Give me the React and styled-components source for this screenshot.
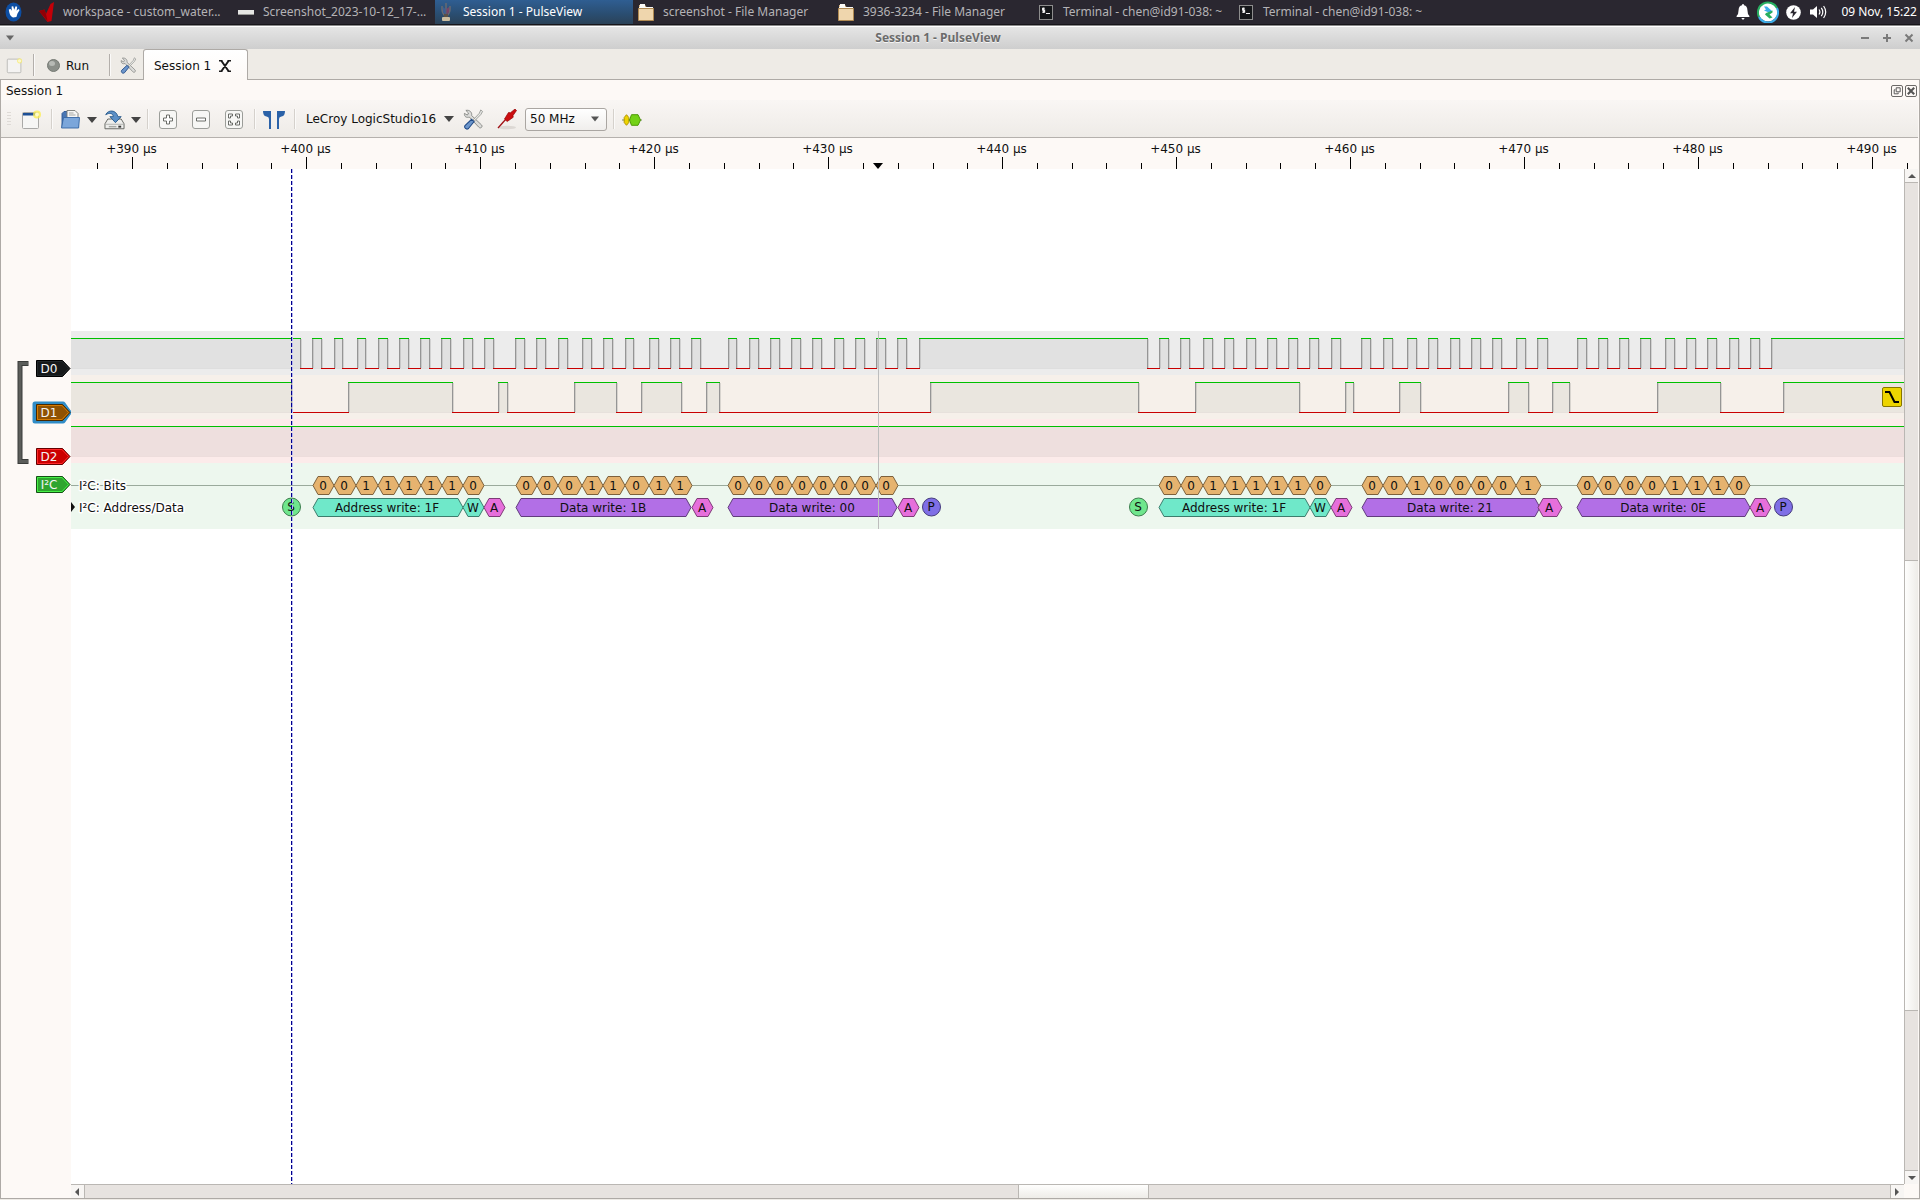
import React from "react";
import styled, { createGlobalStyle, css } from "styled-components";

const GlobalStyle = createGlobalStyle`
  * { box-sizing: border-box; }
  body { margin: 0; background: #eeebe6; }
  button, select { font: inherit; color: inherit; margin: 0; padding: 0; border: 0; background: none; }
  svg { display: block; flex: none; }
`;

const EDGE = "#aeaaa6";

const Screen = styled.div`
  display: flex;
  flex-direction: column;
  height: 100vh;
  overflow: hidden;
  font: 12px/16px "DejaVu Sans", sans-serif;
  color: #101010;
`;

/* ---------- desktop panel ---------- */
const Panel = styled.header`
  display: flex;
  align-items: center;
  height: 25px;
  background: #2a2730;
  border-bottom: 1px solid #17151a;
  font: 12px/16px "Noto Sans", sans-serif;
  color: #b4b3b6;
`;
const MenuButton = styled.button`
  width: 35px;
  padding-left: 5px;
`;
const Tasks = styled.nav`
  display: flex;
  flex: 1;
  height: 100%;
`;
const Task = styled.button`
  display: flex;
  align-items: center;
  gap: 8px;
  width: 200px;
  height: 100%;
  padding-left: 2px;
  white-space: nowrap;
  ${(p) => p.$active && css`
    color: #fff;
    background: linear-gradient(#2f5e92, #2a4d70 60%, #2b4257);
    width: 198px;
    margin-right: 2px;
  `}
`;
const Tray = styled.div`
  display: flex;
  align-items: center;
  gap: 3px;
  padding-right: 3px;
  color: #fff;
`;
const TrayButton = styled.button`
  display: grid;
  place-items: center;
  width: 22px;
  height: 24px;
`;
const Clock = styled.time`
  padding-left: 9px;
  white-space: nowrap;
`;

/* ---------- window frame ---------- */
const TitleBar = styled.div`
  display: grid;
  grid-template-columns: 80px 1fr 124px;
  align-items: center;
  height: 24px;
  padding-top: 1px;
  border-top: 1px solid #8a8a8a;
  box-shadow: inset 0 1px 0 #fff;
  background: linear-gradient(#e6e6e6, #cecece);
  color: #6b6b6b;
`;
const WindowTitle = styled.h1`
  margin: 0;
  text-align: center;
  font: bold 12px/16px "Noto Sans", sans-serif;
  text-shadow: 0 1px 0 #f4f4f4;
`;
const WindowButtons = styled.div`
  display: flex;
  justify-content: flex-end;
`;
const WindowButton = styled.button`
  display: grid;
  place-items: center;
  width: 22px;
  height: 20px;
`;
const MenuCaret = styled(WindowButton)`
  width: 20px;
`;

/* ---------- session tabs ---------- */
const TabRow = styled.div`
  display: flex;
  align-items: center;
  height: 31px;
  background: #eeebe6;
  box-shadow: inset 0 -1px 0 ${EDGE};
`;
const ToolButton = styled.button`
  display: grid;
  place-items: center;
  width: ${(p) => p.$w || 32}px;
  height: 28px;
  padding-top: 1px;
`;
const Separator = styled.span`
  width: 8px;
  height: ${(p) => p.$h || 20}px;
  background: linear-gradient(90deg, transparent 4px, ${(p) => p.$c || "#d5d1cc"} 4px, ${(p) => p.$c || "#d5d1cc"} 5px, #fbfaf9 5px, #fbfaf9 6px, transparent 6px);
`;
const RunButton = styled.button`
  display: flex;
  align-items: center;
  gap: 6px;
  width: 68px;
  height: 28px;
  padding: 2px 0 0 10px;
`;
const Tab = styled.div`
  display: flex;
  align-items: center;
  gap: 8px;
  height: 31px;
  padding: 1px 16px 0 10px;
  border: 1px solid ${EDGE};
  border-bottom: 0;
  border-radius: 3px 3px 0 0;
  background: linear-gradient(#fff, #fdf9f6);
`;

/* ---------- session dock ---------- */
const Dock = styled.main`
  display: flex;
  flex-direction: column;
  flex: 1;
  min-height: 0;
  margin-bottom: 1px;
  border: 1px solid ${EDGE};
  border-top: 0;
  background: #fdf9f6;
`;
const DockTitle = styled.div`
  display: flex;
  align-items: center;
  gap: 2px;
  height: 20px;
  padding: 2px 2px 0 5px;
`;
const DockName = styled.span`
  flex: 1;
`;
const DockButton = styled.button`
  display: grid;
  place-items: center;
  width: 12px;
  height: 12px;
  border: 1px solid #6c6a68;
  border-radius: 2px;
`;
const Toolbar = styled.div`
  display: flex;
  align-items: center;
  height: 38px;
  margin-right: 1px;
  padding-top: 1px;
  border-bottom: 1px solid #b5b1ad;
  background: linear-gradient(#f9f6f4, #eeebe7);
`;
const Grip = styled.span`
  width: 4px;
  height: 16px;
  margin: 0 4px 0 6px;
  background: radial-gradient(circle, #dedad6 1px, transparent 1px) 0 0 / 2px 3px;
`;
const SplitButton = styled.button`
  display: flex;
  align-items: center;
  gap: 6px;
  width: 44px;
  height: 28px;
  padding: 1px 0 0 5px;
`;
const DeviceButton = styled.button`
  display: flex;
  align-items: center;
  justify-content: space-between;
  width: 158px;
  height: 28px;
  padding: 0 2px 0 8px;
  white-space: nowrap;
`;
const RateField = styled.label`
  display: grid;
  grid-template-columns: 1fr 15px;
  align-items: center;
  width: 82px;
  height: 23px;
  margin: 0 2px;
  border: 1px solid #aaa6a2;
  border-radius: 3px;
  background: linear-gradient(#fff, #f0eeec);
`;
const RateSelect = styled.select`
  grid-area: 1 / 1 / 2 / 3;
  height: 21px;
  padding-left: 4px;
  appearance: none;
  outline: 0;
`;
const RateCaret = styled.span`
  grid-area: 1 / 2;
  pointer-events: none;
`;

/* ---------- trace view ---------- */
const RulerRow = styled.div`
  height: 31px;
  padding-left: 70px;
`;
const ViewGrid = styled.div`
  display: grid;
  grid-template-columns: 70px minmax(0, 1fr) 14px;
  grid-template-rows: minmax(0, 1fr) 14px;
  flex: 1;
  min-height: 0;
  padding-right: 1px;
`;
const Labels = styled.div`
  grid-row: 1 / 3;
  padding: 191px 0 0 15px;
`;
const Group = styled.div`
  display: flex;
  gap: 7px;
`;
const TagColumn = styled.div`
  display: flex;
  flex-direction: column;
  gap: 26px;
`;
const DecoderTag = styled.div`
  padding: 10px 0 0 20px;
`;
const TagButton = styled.button`
  display: block;
  height: 18px;
`;
const Traces = styled.div`
  position: relative;
  overflow: hidden;
  padding-top: 162px;
  background: #fff;
`;
const Lane = styled.div`
  position: relative;
  height: ${(p) => p.$h || 44}px;
  background: ${(p) => p.$bg};
`;
const Overlay = styled.svg`
  position: absolute;
  inset: 0;
  pointer-events: none;
`;
const Trigger = styled.button`
  position: absolute;
  top: 12px;
  right: 2px;
  display: grid;
  place-items: center;
  width: 20px;
  height: 20px;
  border: 1px solid #877600;
  border-radius: 2px;
  background: #edd400;
`;
const ScrollBar = styled.div`
  display: flex;
  flex-direction: ${(p) => (p.$vertical ? "column" : "row")};
  background: #e7e3e0;
  ${(p) => (p.$vertical ? `border-left: 1px solid #bab7b3;` : `border-top: 1px solid #bab7b3;`)}
`;
const ScrollButton = styled.button`
  display: grid;
  place-items: center;
  flex: none;
  width: 13px;
  height: 13px;
  background: #f7f5f3;
`;
const Track = styled.div`
  display: flex;
  flex: 1;
  flex-direction: inherit;
  ${(p) => (p.$vertical
    ? `border-top: 1px solid #bab7b3; border-bottom: 1px solid #bab7b3;`
    : `border-left: 1px solid #bab7b3; border-right: 1px solid #bab7b3;`)}
`;
const Space = styled.span`
  flex: ${(p) => p.$n} 0 0;
`;
const Thumb = styled.div`
  flex: ${(p) => p.$n} 0 0;
  ${(p) => (p.$vertical
    ? `border-top: 1px solid #bab7b3; border-bottom: 1px solid #bab7b3; background: linear-gradient(90deg, #fefefd, #eeece8);`
    : `border-left: 1px solid #bab7b3; border-right: 1px solid #bab7b3; background: linear-gradient(#fefefd, #eeece8);`)}
`;

/* ---------- icons ---------- */
const Caret = ({ w = 10, c = "#444" }) => (
  <svg width={w} height="6" viewBox="0 0 10 6"><path d="M0 0H10L5 6Z" fill={c} /></svg>
);
const MouseIcon = () => (
  <svg width="18" height="20" viewBox="0 0 18 20">
    <ellipse cx="8.500" cy="10" rx="8" ry="9.500" fill="#0d4ea3" />
    <path d="M3.800 7.500l1.800-.5 1.200 1.800L6.600 4.500l1.600-.2 1 3.500 1.400-3.500 1.600.4-.6 4 1.800-1.600 1.200.9-2.200 3.700-1 3.300-3.300.4C5.200 14.500 4.200 11 3.800 7.500Z" fill="#fff" />
  </svg>
);
const CheckMarkIcon = () => (
  <svg width="18" height="20" viewBox="0 0 18 20">
    <path d="M2 9l5.500-1.500L9 12 13.500 2 17 0 14.500 19 10.500 20Z" fill="#c40008" />
    <path d="M2 9l5.500-1.500L9 12l1.500 7Z" fill="#8f0006" />
  </svg>
);
const ShotIcon = () => (
  <svg width="18" height="20"><rect x="1" y="8" width="16" height="5" fill="#e6e6e4" /><rect x="1" y="12" width="16" height="1" fill="#9a9a98" /></svg>
);
const ProbeAppIcon = () => (
  <svg width="18" height="20" viewBox="0 0 18 20">
    <path d="M5 4v3q0 4 3 7M13 4v3q0 4-3 7M9 1v12" stroke="#676a72" strokeWidth="1.500" fill="none" />
    <path d="M6 5l2.500 2v6L6 10Z" fill="#3c5f94" /><path d="M12 5L9.500 7v6l2.500-3Z" fill="#7a4468" />
    <rect x="7" y="12" width="4" height="4" fill="#5b5147" /><rect x="5" y="15" width="8" height="4" rx="1" fill="#cbbd9f" />
  </svg>
);
const FolderIcon = () => (
  <svg width="18" height="20" viewBox="0 0 18 20">
    <path d="M2 3h6l1.500 2H16v5H2Z" fill="#d9b98a" />
    <path d="M3 2h5v3h8v2H2V5h1Z" fill="#fbfaf6" />
    <path d="M1.500 6.500h15v12h-15Z" fill="#efd6ad" stroke="#b08a52" />
  </svg>
);
const TerminalIcon = () => (
  <svg width="18" height="20" viewBox="0 0 18 20">
    <rect x="2.500" y="3.500" width="13" height="14" fill="#15171a" stroke="#8d8d8d" />
    <path d="M7.800 6.300H5.600v1.800h2v2H5.200M6.600 5.500v5.500M9 11.500h4" stroke="#f0f0f0" strokeWidth="1.100" fill="none" />
  </svg>
);
const NewIcon = ({ s = 20, faded }) => (
  <svg width={s} height={s} viewBox="0 0 20 20" opacity={faded ? 0.8 : 1}>
    <rect x="1.500" y="2.500" width="16" height="16" rx="1" fill="#f6f6f5" stroke="#a9a9a7" />
    {!faded && <rect x="2" y="3" width="15" height="2.500" fill="#1d4f96" />}
    <circle cx="16" cy="4.500" r={faded ? 3 : 4} fill="#fcee4b" opacity=".75" />
    <circle cx="16" cy="4.500" r="2" fill="#fffbc9" />
  </svg>
);
const ToolsIcon = ({ s = 21 }) => (
  <svg width={s} height={s} viewBox="0 0 22 22">
    <path d="M3 1.500l2.800 2.700L4.600 6.400 1.500 4.600C1 8 3.800 9.500 6.600 8.400L16.500 19c1.800 2 4.500-.2 3-2.200L9 6.800C9.800 3.800 7 .5 3 1.500Z" fill="#dcdcda" stroke="#7d7f7c" strokeWidth=".9" />
    <path d="M18.600 1l1.900 1.600-1.900 3.300-6.600 6.600-1.300-1.200 6.400-6.800Z" fill="#e9e9e7" stroke="#888a85" strokeWidth=".8" />
    <path d="M9 10.800l2.600 2.400-5.800 7.200c-2.400 1.800-5-.8-3.700-3.100Z" fill="#6d96cb" stroke="#204a87" strokeWidth="1.100" />
  </svg>
);
const OpenIcon = () => (
  <svg width="21" height="21" viewBox="0 0 21 21">
    <path d="M2 4.500l2-2h4V9h10v9H2Z" fill="#4a77b4" stroke="#2c5894" strokeWidth=".9" />
    <path d="M7 9V1.500h8l3 3V10" fill="#f5f5f4" stroke="#777975" strokeWidth=".9" />
    <path d="M9 4h4.500M9 6h6.500" stroke="#9d9f9b" strokeWidth=".9" />
    <path d="M3.500 8.500h16L18.600 19H1.500Z" fill="#7ba6da" stroke="#3465a4" strokeWidth=".9" />
  </svg>
);
const SaveIcon = () => (
  <svg width="21" height="21" viewBox="0 0 22 21">
    <path d="M4 10h14l3 5v5.200H1V15Z" fill="#eeeeec" stroke="#646662" strokeWidth="1" />
    <path d="M1.500 15.500h19" stroke="#a0a29e" strokeWidth=".8" />
    <path d="M5 18h8" stroke="#a6a8a4" strokeWidth="1.500" /><path d="M15 17h3v2h-3Z" fill="#333" />
    <path d="M1.800 5.500C4 0 13 0 14.500 7.500h3.500l-6 6.300-5.800-6.300h3.500C9.500 3.800 5.500 3.200 1.800 5.500Z" fill="#5b8fc6" stroke="#235689" strokeWidth=".9" />
  </svg>
);
const ZoomIcon = ({ kind }) => (
  <svg width="18" height="19" viewBox="0 0 18 19">
    <rect x=".5" y=".5" width="17" height="18" rx="2.500" fill="#f7f7f5" stroke="#9b9d99" />
    {kind === "in" && <path d="M7.500 5h3v3h3v3h-3v3h-3v-3h-3V8h3Z" fill="#fff" stroke="#5b5d59" strokeWidth=".9" />}
    {kind === "out" && <path d="M4.500 8h9v3h-9Z" fill="#fff" stroke="#5b5d59" strokeWidth=".9" />}
    {kind === "fit" && (
      <path d="M3.500 4H7.500v2H5.500V8H3.500ZM14.500 4H10.500v2h2V8h2ZM3.500 15H7.500v-2H5.500V11H3.500ZM14.500 15H10.500v-2h2V11h2Z" fill="#fff" stroke="#5b5d59" strokeWidth=".9" />
    )}
  </svg>
);
const CursorsIcon = () => (
  <svg width="22" height="18" viewBox="0 0 22 18">
    <path d="M0 0h8v18H6V8Q6 6 3.500 5.600 0 5 0 0ZM22 0h-8v18h2V8q0-2 2.500-2.400Q22 5 22 0Z" fill="#2b62a8" />
  </svg>
);
const ProbeIcon = () => (
  <svg width="20" height="21" viewBox="0 0 20 21">
    <ellipse cx="10" cy="18.500" rx="9" ry="1.800" fill="#dcd8d4" />
    <path d="M1 19L9 10" stroke="#a01015" strokeWidth="1.300" />
    <path d="M7.500 10l4-6.500 2 .2L18 0l1.500 1.500L16 6.500l.2 1.800-6 4.200Z" fill="#cc0d10" stroke="#930003" strokeWidth=".7" />
  </svg>
);
const DecoderIcon = () => (
  <svg width="20" height="12" viewBox="0 0 20 12">
    <path d="M0 6h20" stroke="#77885f" />
    <path d="M4.500 .700L6.800 3.500v5L4.500 11.300 2.200 8.500v-5Z" fill="#edd400" stroke="#b39500" />
    <path d="M9.500 .7h6.500L18.500 6 16 11.300H9.500L7.500 6Z" fill="#73d216" stroke="#4e9a06" />
  </svg>
);
const BellIcon = () => (
  <svg width="14" height="16" viewBox="0 0 14 16">
    <path d="M7 0q1 0 1 1.300Q11.300 2 11.400 6q0 4 2 6v1H.6v-1q2-2 2-6 .1-4 3.400-4.700Q6 0 7 0ZM5.200 14h3.600L7 16Z" fill="#fff" />
  </svg>
);
const SyncIcon = () => (
  <svg width="22" height="22" viewBox="0 0 22 22">
    <circle cx="11" cy="11" r="9.500" fill="#fff" />
    <path d="M2 16A10 10 0 0 1 20 7" fill="none" stroke="#27ae60" strokeWidth="2" />
    <path d="M20 7A10 10 0 0 1 2 16" fill="none" stroke="#3daee9" strokeWidth="2" />
    <path d="M7 5.500h3l5 4.500-2 2-6-2.500 2-1Z" fill="#3daee9" />
    <path d="M15.500 9.500L9 12l-1 1.500 4.500 4 3-1-3-3 3-2Z" fill="#27ae60" />
  </svg>
);
const BoltIcon = () => (
  <svg width="15" height="15" viewBox="0 0 15 15"><circle cx="7.500" cy="7.500" r="7.300" fill="#fff" /><path d="M9 2L4 8.200h3L6 13l5-6.200H8Z" fill="#2a2730" /></svg>
);
const VolumeIcon = () => (
  <svg width="17" height="14" viewBox="0 0 17 14">
    <path d="M0 4.500h3L7 1v12L3 9.500H0Z" fill="#fff" />
    <path d="M9 4.500q1.800 2.500 0 5M11.300 2.800q3 4.200 0 8.400M13.600 1q4.200 6 0 12" fill="none" stroke="#fff" strokeWidth="1.200" />
  </svg>
);

/* ---------- data, in view pixels from the left edge of the plot ---------- */
const OX = 71;
const D0_EDGES = [
  300, 312, 321, 334, 342, 357, 365, 378, 387, 399, 408, 420, 429, 441, 450, 463, 472, 484, 493,
  515, 524, 536, 545, 558, 567, 582, 591, 603, 612, 625, 633, 649, 658, 670, 679, 691, 700,
  728, 736, 749, 758, 770, 779, 791, 800, 812, 821, 834, 843, 855, 864, 876, 885, 897, 906, 919,
  1147, 1159, 1168, 1180, 1189, 1203, 1212, 1224, 1233, 1246, 1255, 1267, 1276, 1288, 1297, 1309, 1318, 1331, 1340,
  1361, 1370, 1383, 1392, 1407, 1416, 1428, 1437, 1450, 1459, 1471, 1480, 1492, 1501, 1516, 1525, 1537, 1547,
  1577, 1586, 1598, 1607, 1619, 1628, 1640, 1650, 1665, 1674, 1686, 1695, 1707, 1716, 1729, 1738, 1750, 1759, 1771,
];
const D1_EDGES = [
  291, 348, 452, 498, 507, 574, 616, 641, 681, 706, 719, 930, 1138, 1195, 1299, 1345, 1353,
  1399, 1420, 1508, 1528, 1552, 1569, 1657, 1720, 1783,
];
const BIT_GROUPS = [
  ["00111110", [313, 334, 356, 378, 399, 421, 442, 463, 484]],
  ["00011011", [516, 537, 558, 582, 603, 625, 649, 670, 692]],
  ["00000000", [728, 749, 770, 792, 813, 834, 855, 876, 898]],
  ["00111110", [1159, 1181, 1203, 1225, 1246, 1267, 1288, 1310, 1331]],
  ["00100001", [1362, 1383, 1407, 1429, 1450, 1471, 1492, 1516, 1541]],
  ["00001110", [1577, 1598, 1620, 1641, 1665, 1687, 1708, 1729, 1750]],
];
const TEAL = "#6fe8c9";
const VIOLET = "#b26fe6";
const PINK = "#e66fdb";
const WORDS = [
  [313, 463, "Address write: 1F", TEAL], [463, 484, "W", TEAL], [484, 505, "A", PINK],
  [516, 691, "Data write: 1B", VIOLET], [692, 713, "A", PINK],
  [728, 897, "Data write: 00", VIOLET], [898, 919, "A", PINK],
  [1159, 1310, "Address write: 1F", TEAL], [1310, 1331, "W", TEAL], [1331, 1352, "A", PINK],
  [1362, 1540, "Data write: 21", VIOLET], [1538, 1562, "A", PINK],
  [1577, 1750, "Data write: 0E", VIOLET], [1750, 1771, "A", PINK],
];
const MARKS = [[291, "S", "#6fe68d"], [931, "P", "#7f6fe6"], [1138, "S", "#6fe68d"], [1783, "P", "#7f6fe6"]];
const FAR = 6000;

function Wave({ edges, fill }) {
  const points = [-1, ...edges.map((e) => e - OX), FAR];
  return (
    <svg width="100%" height="44">
      <path d={`M0 37.500H${FAR}`} stroke="#000" strokeOpacity=".06" />
      {points.slice(0, -1).map((x, i) => {
        const end = points[i + 1];
        const high = i % 2 === 0;
        return (
          <g key={x}>
            {high && <rect x={x} y="7" width={end - x} height="30" fill={fill} />}
            {i > 0 && <path d={`M${x + 0.5} 7V38`} stroke="#959595" />}
            {i > 0 && <path d={`M${x + 1.5} 8V37`} stroke="#808080" strokeOpacity=".25" />}
          </g>
        );
      })}
      {points.slice(0, -1).map((x, i) => (
        <path key={x} d={`M${x} ${i % 2 ? 37.5 : 7.5}H${points[i + 1] + 1}`} stroke={i % 2 ? "#c80000" : "#00c000"} />
      ))}
    </svg>
  );
}

function Hex({ x1, x2, cy, label, fill, stroke }) {
  const a = x1 - OX;
  const b = x2 - OX;
  const k = 5;
  return (
    <g>
      <path d={`M${a} ${cy}L${a + k} ${cy - 9}H${b - k}L${b} ${cy}L${b - k} ${cy + 9}H${a + k}Z`} fill={fill} stroke={stroke} />
      <text x={Math.floor((a + b) / 2 - 0.5)} y={cy + 4} textAnchor="middle">{label}</text>
    </g>
  );
}

function Decoder() {
  const gaps = [[71, 313], [484, 516], [692, 728], [898, 1159], [1331, 1362], [1541, 1577], [1750, FAR]];
  return (
    <svg width="100%" height="66" fill="#101010">
      {gaps.map(([a, b]) => <path key={a} d={`M${a - OX} 22.500H${b - OX}`} stroke="#9aaa9c" />)}
      {BIT_GROUPS.map(([bits, xs]) => [...bits].map((bit, i) => (
        <Hex key={xs[i]} x1={xs[i]} x2={xs[i + 1]} cy={22.5} label={bit} fill="#e6b36f" stroke="#7d613c" />
      )))}
      {WORDS.map(([a, b, label, fill]) => (
        <Hex key={a} x1={a} x2={b} cy={44.5} label={label} fill={fill} stroke={fill === TEAL ? "#3c7d6d" : fill === PINK ? "#7d3c77" : "#613c7d"} />
      ))}
      {MARKS.map(([x, label, fill]) => (
        <g key={x}>
          <circle cx={x - OX + 0.5} cy="44" r="9" fill={fill} stroke={label === "S" ? "#3c7d4d" : "#453c7d"} />
          <text x={x - OX} y="48" textAnchor="middle">{label}</text>
        </g>
      ))}
      <g stroke="#fff" strokeWidth="3" strokeLinejoin="round" paintOrder="stroke">
        <text x="8" y="27">I²C: Bits</text>
        <text x="8" y="49">I²C: Address/Data</text>
      </g>
      <path d="M0 39l4 5-4 5Z" />
    </svg>
  );
}

function Ruler() {
  const ticks = Array.from({ length: 53 }, (_, i) => i - 1);
  return (
    <svg width="100%" height="31" fill="#101010">
      {ticks.map((k) => {
        const x = Math.floor(61.6 + k * 34.8);
        const major = k % 5 === 0;
        return (
          <g key={k}>
            <path d={`M${x + 0.5} ${major ? 19 : 25}V31`} stroke="#000" />
            {major && <text x={x - 0.5} y="15" textAnchor="middle">{`+${390 + k * 2} µs`}</text>}
          </g>
        );
      })}
      <path d="M802 25h10l-5 6Z" fill="#000" />
    </svg>
  );
}

function Tag({ name, fill, dark, light, selected }) {
  return (
    <TagButton aria-label={name}>
      <svg width="35" height="18" overflow="visible">
        {selected && <path d="M-1 0H27L33 8.500 27 17H-1Z" fill="none" stroke="#308cc6" strokeWidth="5" strokeLinejoin="round" />}
        <path d="M.5 .5H26.500L34 8.500 26.500 16.500H.5Z" fill={fill} stroke={dark} />
        <path d="M1.500 1.500H26L32.500 8.500 26 15.500H1.500Z" fill="none" stroke={light} />
        <text x="13" y="13" textAnchor="middle" fill="#f4f4f4">{name}</text>
      </svg>
    </TagButton>
  );
}

const TASKS = [
  ["workspace - custom_water...", CheckMarkIcon],
  ["Screenshot_2023-10-12_17-...", ShotIcon],
  ["Session 1 - PulseView", ProbeAppIcon, true],
  ["screenshot - File Manager", FolderIcon],
  ["3936-3234 - File Manager", FolderIcon],
  ["Terminal - chen@id91-038: ~", TerminalIcon],
  ["Terminal - chen@id91-038: ~", TerminalIcon],
];

const Glyph = ({ d, s = 10, w = 2, c = "#7a7a7a" }) => (
  <svg width={s} height={s} viewBox="0 0 10 10"><path d={d} stroke={c} strokeWidth={w} fill="none" /></svg>
);
const Arrow = ({ d }) => <svg width="8" height="8" viewBox="0 0 8 8"><path d={d} fill="#555" /></svg>;

export default function App() {
  return (
    <Screen>
      <GlobalStyle />
      <Panel>
        <MenuButton aria-label="Applications"><MouseIcon /></MenuButton>
        <Tasks>
          {TASKS.map(([title, Icon, active], i) => (
            <Task key={i} $active={active}><Icon />{title}</Task>
          ))}
        </Tasks>
        <Tray>
          <TrayButton aria-label="Notifications"><BellIcon /></TrayButton>
          <TrayButton aria-label="Sync"><SyncIcon /></TrayButton>
          <TrayButton aria-label="Power"><BoltIcon /></TrayButton>
          <TrayButton aria-label="Volume"><VolumeIcon /></TrayButton>
          <Clock>09 Nov, 15:22</Clock>
        </Tray>
      </Panel>

      <TitleBar>
        <MenuCaret aria-label="Window menu"><Caret w={8} c="#666" /></MenuCaret>
        <WindowTitle>Session 1 - PulseView</WindowTitle>
        <WindowButtons>
          <WindowButton aria-label="Minimize"><Glyph d="M1 5H9" /></WindowButton>
          <WindowButton aria-label="Maximize"><Glyph d="M1 5H9M5 1V9" /></WindowButton>
          <WindowButton aria-label="Close"><Glyph d="M1.500 1.500L8.500 8.500M8.500 1.500L1.500 8.500" /></WindowButton>
        </WindowButtons>
      </TitleBar>

      <TabRow>
        <ToolButton $w={29} aria-label="New session"><NewIcon s={17} faded /></ToolButton>
        <Separator $h={22} $c="#b3afab" />
        <RunButton>
          <svg width="13" height="13">
            <circle cx="6.500" cy="6.500" r="6" fill="#8b8f89" stroke="#767a74" />
            <ellipse cx="5" cy="4.500" rx="3" ry="2.500" fill="#b7bab5" />
          </svg>
          Run
        </RunButton>
        <Separator $h={22} $c="#b3afab" />
        <ToolButton $w={30} aria-label="Settings"><ToolsIcon s={17} /></ToolButton>
        <Tab>
          Session 1
          <button aria-label="Close tab">
            <Glyph d="M1.500 0L8.500 10M8.500 0L1.500 10M0 .5H3M7 .5H10M0 9.500H3M7 9.500H10" s={12} w={1.6} c="#1a1a1a" />
          </button>
        </Tab>
      </TabRow>

      <Dock>
        <DockTitle>
          <DockName>Session 1</DockName>
          <DockButton aria-label="Float">
            <Glyph d="M4 1H9V6H4ZM3 3.500H1.500V8.500H6.500V7" s={8} w={1.2} c="#555" />
          </DockButton>
          <DockButton aria-label="Close"><Glyph d="M1 1L9 9M9 1L1 9" s={8} w={2.6} c="#555" /></DockButton>
        </DockTitle>

        <Toolbar>
          <Grip />
          <ToolButton aria-label="New view"><NewIcon /></ToolButton>
          <Separator />
          <SplitButton aria-label="Open"><OpenIcon /><Caret /></SplitButton>
          <SplitButton aria-label="Save"><SaveIcon /><Caret /></SplitButton>
          <Separator />
          <ToolButton $w={33} aria-label="Zoom in"><ZoomIcon kind="in" /></ToolButton>
          <ToolButton $w={33} aria-label="Zoom out"><ZoomIcon kind="out" /></ToolButton>
          <ToolButton $w={33} aria-label="Zoom to fit"><ZoomIcon kind="fit" /></ToolButton>
          <Separator />
          <ToolButton aria-label="Show cursors"><CursorsIcon /></ToolButton>
          <Separator />
          <DeviceButton>LeCroy LogicStudio16<Caret /></DeviceButton>
          <ToolButton $w={34} aria-label="Configure device"><ToolsIcon /></ToolButton>
          <ToolButton $w={33} aria-label="Configure channels"><ProbeIcon /></ToolButton>
          <RateField>
            <RateSelect aria-label="Sample rate" defaultValue="50 MHz"><option>50 MHz</option></RateSelect>
            <RateCaret><Caret w={8} c="#555" /></RateCaret>
          </RateField>
          <Separator />
          <ToolButton $w={30} aria-label="Add decoder"><DecoderIcon /></ToolButton>
        </Toolbar>

        <RulerRow><Ruler /></RulerRow>
        <ViewGrid>
          <Labels>
            <Group>
              <svg width="13" height="106">
                <path d="M12.500 3.500H4V101.500H12.500" fill="none" stroke="#3a3c3a" strokeWidth="5" />
                <path d="M12 3.500H4V101.500H12" fill="none" stroke="#5b5d5a" strokeWidth="3" />
              </svg>
              <TagColumn>
                <Tag name="D0" fill="#16191a" dark="#000" light="#22282a" />
                <Tag name="D1" fill="#8f5202" dark="#472900" light="#d67b03" selected />
                <Tag name="D2" fill="#cc0000" dark="#660000" light="#ff2a2a" />
              </TagColumn>
            </Group>
            <DecoderTag><Tag name="I²C" fill="#2fa52f" dark="#145214" light="#46f046" /></DecoderTag>
          </Labels>

          <Traces>
            <Lane $bg="#ececec"><Wave edges={D0_EDGES} fill="#e1e1e1" /></Lane>
            <Lane $bg="#f6f0ea">
              <Wave edges={D1_EDGES} fill="#eae6df" />
              <Trigger aria-label="Falling edge trigger">
                <svg width="14" height="14"><path d="M0 2H4.500L9.500 12H14" fill="none" stroke="#000" strokeWidth="2" /></svg>
              </Trigger>
            </Lane>
            <Lane $bg="#fcebea"><Wave edges={[]} fill="#eedfde" /></Lane>
            <Lane $bg="#edf7ee" $h={66}><Decoder /></Lane>
            <Overlay width="100%" height="100%">
              <path d="M220.500 0V3000" stroke="#00008c" strokeDasharray="4 2" />
              <path d="M221.500 0V3000" stroke="#b4b4f0" strokeDasharray="4 2" />
              <path d="M807.500 162V360" stroke="#bdbdbd" />
            </Overlay>
          </Traces>

          <ScrollBar $vertical>
            <ScrollButton aria-label="Scroll up"><Arrow d="M0 6L4 2 8 6Z" /></ScrollButton>
            <Track $vertical><Space $n={378} /><Thumb $vertical $n={451} /><Space $n={159} /></Track>
            <ScrollButton aria-label="Scroll down"><Arrow d="M0 2L4 6 8 2Z" /></ScrollButton>
          </ScrollBar>
          <ScrollBar>
            <ScrollButton aria-label="Scroll left"><Arrow d="M5 0L1 4 5 8Z" /></ScrollButton>
            <Track><Space $n={935} /><Thumb $n={129} /><Space $n={743} /></Track>
            <ScrollButton aria-label="Scroll right"><Arrow d="M1 0L5 4 1 8Z" /></ScrollButton>
          </ScrollBar>
        </ViewGrid>
      </Dock>
    </Screen>
  );
}
